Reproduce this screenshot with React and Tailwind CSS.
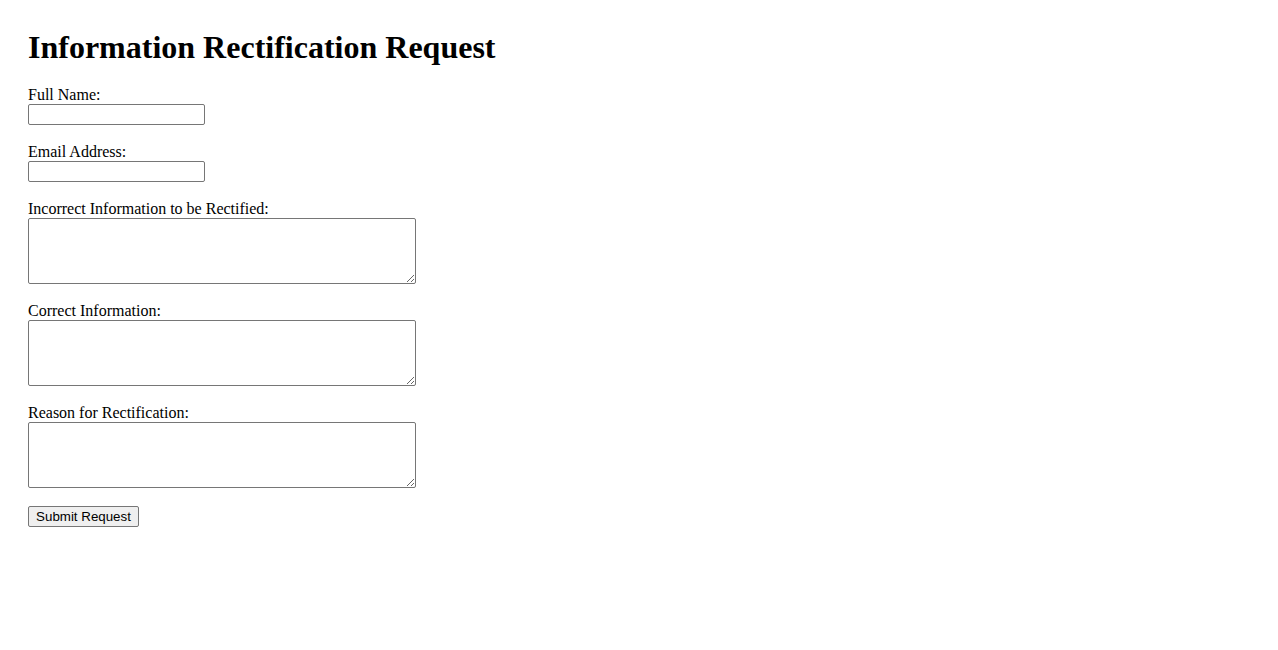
import { useState } from 'react'

const SERIF = { fontFamily: '"Liberation Serif", "Times New Roman", serif' }

function Field({ label, children }) {
  return (
    <div className="flex flex-col items-start mb-[18px]">
      <label className="block h-[18px] leading-[18px] text-[16px] text-black">{label}</label>
      {children}
    </div>
  )
}

export default function App() {
  const [form, setForm] = useState({ name: '', email: '', incorrect: '', correct: '', reason: '' })
  const set = (k) => (e) => setForm({ ...form, [k]: e.target.value })

  const inputCls = 'block w-[177px] h-[21px] border border-[#767676] rounded-[2px] px-[2px] text-[13px] bg-white outline-none'
  const areaCls = 'block w-[388px] h-[66px] border border-[#767676] rounded-[2px] p-[2px] text-[13px] bg-white outline-none resize'

  return (
    <div className="min-h-screen bg-white text-black pt-[29px] pl-[28px]" style={SERIF}>
      <h1 className="text-[32px] font-bold h-[37px] leading-[37px] mb-[20px]">
        Information Rectification Request
      </h1>

      <form onSubmit={(e) => e.preventDefault()}>
        <Field label="Full Name:">
          <input type="text" className={inputCls} value={form.name} onChange={set('name')} />
        </Field>
        <Field label="Email Address:">
          <input type="email" className={inputCls} value={form.email} onChange={set('email')} />
        </Field>
        <Field label="Incorrect Information to be Rectified:">
          <textarea className={areaCls} value={form.incorrect} onChange={set('incorrect')} />
        </Field>
        <Field label="Correct Information:">
          <textarea className={areaCls} value={form.correct} onChange={set('correct')} />
        </Field>
        <Field label="Reason for Rectification:">
          <textarea className={areaCls} value={form.reason} onChange={set('reason')} />
        </Field>

        <button
          type="submit"
          className="block h-[21px] w-[111px] border border-[#767676] rounded-[2px] bg-[#efefef] text-[13.33px] leading-[19px] text-black"
          style={{ fontFamily: '"Liberation Sans", Arial, sans-serif' }}
        >
          Submit Request
        </button>
      </form>
    </div>
  )
}
